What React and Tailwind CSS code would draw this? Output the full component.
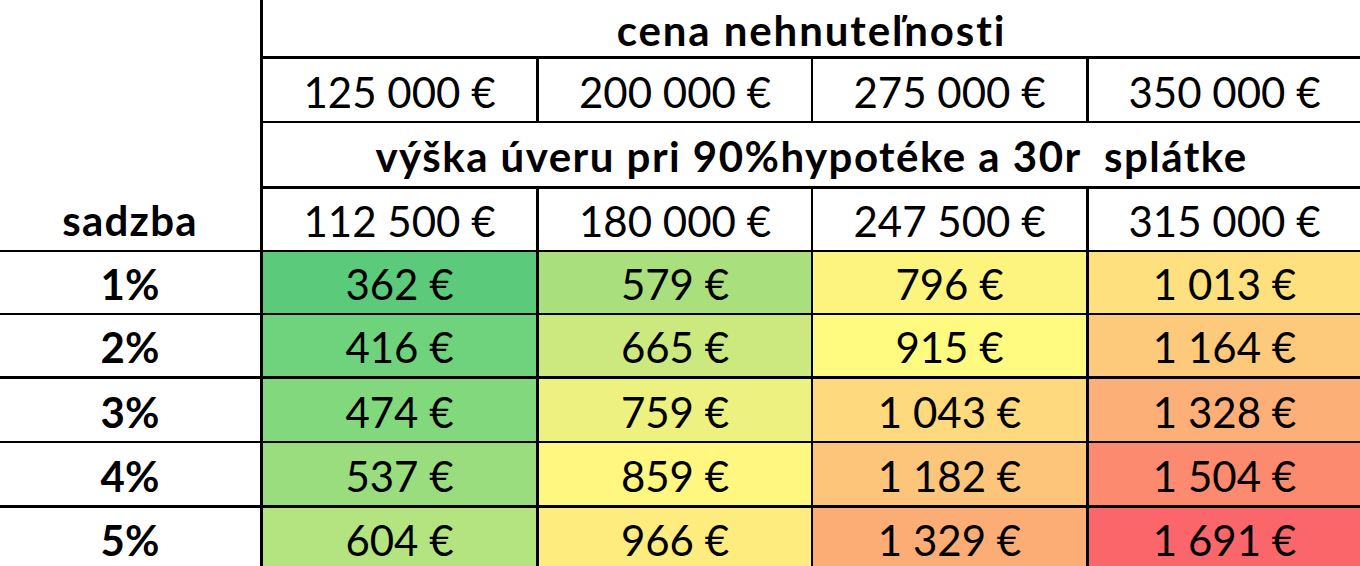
import clsx from "clsx";

const prices = ["125 000 €", "200 000 €", "275 000 €", "350 000 €"];
const loans = ["112 500 €", "180 000 €", "247 500 €", "315 000 €"];

// left border of each price column (spreadsheet grid lines differ in weight)
const colLeft = ["border-l-[3px]", "border-l-[3px]", "border-l-2", "border-l-[3px]"];

const rows = [
  {
    rate: "1%",
    top: "border-t-2",
    cells: [
      ["362 €", "bg-[#5bcb7b]"],
      ["579 €", "bg-[#a9e07d]"],
      ["796 €", "bg-[#fdf480]"],
      ["1 013 €", "bg-[#fee17e]"],
    ],
  },
  {
    rate: "2%",
    top: "border-t-2",
    cells: [
      ["416 €", "bg-[#6ed37c]"],
      ["665 €", "bg-[#cbe97f]"],
      ["915 €", "bg-[#fffa80]"],
      ["1 164 €", "bg-[#fdc97a]"],
    ],
  },
  {
    rate: "3%",
    top: "border-t-[3px]",
    cells: [
      ["474 €", "bg-[#81d87d]"],
      ["759 €", "bg-[#ecf17f]"],
      ["1 043 €", "bg-[#fed97d]"],
      ["1 328 €", "bg-[#fcaf76]"],
    ],
  },
  {
    rate: "4%",
    top: "border-t-2",
    cells: [
      ["537 €", "bg-[#99dd7e]"],
      ["859 €", "bg-[#fff780]"],
      ["1 182 €", "bg-[#fdc579]"],
      ["1 504 €", "bg-[#fb8a6e]"],
    ],
  },
  {
    rate: "5%",
    top: "border-t-[3px]",
    cells: [
      ["604 €", "bg-[#b3e47f]"],
      ["966 €", "bg-[#feec7f]"],
      ["1 329 €", "bg-[#fcad75]"],
      ["1 691 €", "bg-[#fa6669]"],
    ],
  },
];

function Cell({ className, children }) {
  return (
    <div className={clsx("flex items-center justify-center pt-[3px] border-black whitespace-pre", className)}>
      {children}
    </div>
  );
}

export default function App() {
  return (
    <div className="w-[1360px] h-[566px] overflow-hidden bg-white text-black font-[family-name:Lato,sans-serif]">
      <div className="grid grid-cols-[260px_276px_275px_275px_274px] grid-rows-[56px_65px_65px_64px_63px_63px_65px_64px_64px] text-[42px] leading-none">
        {/* cena nehnuteľnosti */}
        <Cell />
        <Cell className="col-span-4 border-l-[3px] font-bold tracking-[0.045em]">cena nehnuteľnosti</Cell>

        <Cell />
        {prices.map((p, i) => (
          <Cell key={p} className={clsx("border-t-[3px]", colLeft[i])}>
            {p}
          </Cell>
        ))}

        <Cell />
        <Cell className="col-span-4 border-l-[3px] border-t-2 font-bold tracking-[0.035em]">
          výška úveru pri 90%hypotéke a 30r  splátke
        </Cell>

        <Cell className="font-bold tracking-[0.03em]">sadzba</Cell>
        {loans.map((l, i) => (
          <Cell key={l} className={clsx("border-t-[3px]", colLeft[i])}>
            {l}
          </Cell>
        ))}

        {rows.map((r) => (
          <div key={r.rate} className="contents">
            <Cell className={clsx("font-bold", r.top)}>{r.rate}</Cell>
            {r.cells.map(([v, bg], i) => (
              <Cell key={v} className={clsx(r.top, colLeft[i], bg)}>
                {v}
              </Cell>
            ))}
          </div>
        ))}
      </div>
    </div>
  );
}
